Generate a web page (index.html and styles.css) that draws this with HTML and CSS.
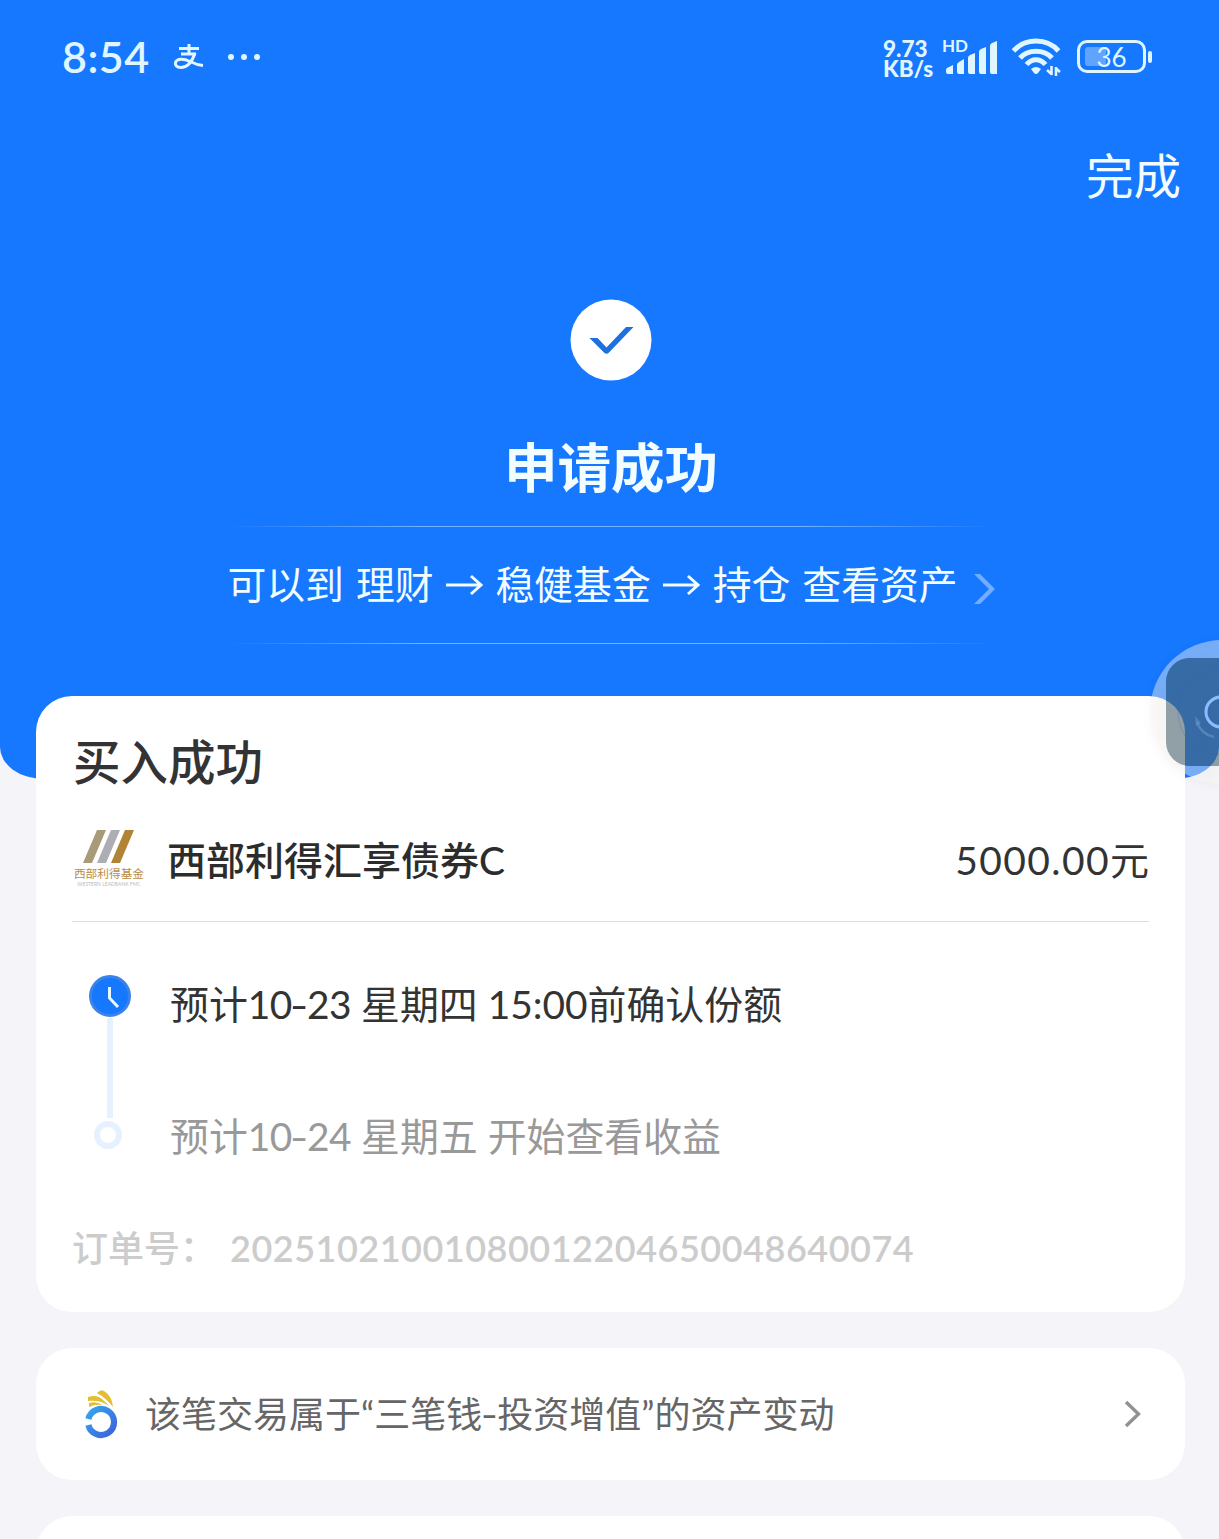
FILE: index.html
```html
<!DOCTYPE html>
<html lang="zh-CN">
<head>
  <meta charset="UTF-8" />
  <meta name="viewport" content="width=device-width, initial-scale=1.0"/>
  <title>申请成功</title>
  <link rel="stylesheet" href="styles.css">
</head>
<body>

  <header class="hero">
    <div class="status-bar">
      <div class="status-left">
        <span class="time">8:54</span>
        <svg class="pay-icon" width="30" height="28" viewBox="0 0 30 28" fill="none" stroke="#e4f7ff">
          <path d="M5 5.5H25M15 1V11M7 11H22" stroke-width="3"/>
          <path d="M21 10C18 19 13 24.500 7 24.500C2.500 24.500 1 22 1.500 19.500C3 15 10 15.500 16 18.500C20 20.500 24 22 29 22.500" stroke-width="3"/>
        </svg>
        <svg class="dots" width="34" height="8" viewBox="0 0 34 8" fill="#e0f6ff">
          <circle cx="4" cy="4" r="3"/><circle cx="17" cy="4" r="3"/><circle cx="30" cy="4" r="3"/>
        </svg>
      </div>
      <div class="status-right">
        <div class="speed"><span>9.73</span><span>KB/s</span></div>
        <div class="signal">
          <span class="hd">HD</span>
          <svg width="54" height="36" viewBox="0 0 54 36" fill="#e0f6ff">
            <path d="M1 31Q1 30 2 29L8 26V35H3Q1 35 1 33ZM12 26Q12 24 14 23L19 20V35H14Q12 35 12 33ZM23 19Q23 17 25 16L30 14V35H25Q23 35 23 33ZM34 13Q34 11 36 10L41 8V35H36Q34 35 34 33ZM45 7Q45 5 47 4L52 2V35H47Q45 35 45 33Z"/>
          </svg>
        </div>
        <svg class="wifi" width="50" height="40" viewBox="0 0 50 40" fill="none" stroke="#e0f6ff" stroke-width="5">
          <path d="M2.500 14C14 0.800 36 0.800 47.500 14M9 21C17 12 33 12 41 21M15.500 27.500C21 21 29 21 34.500 27.500"/>
          <path d="M20 32Q25 28 30 32L27 36Q25 38 23 36Z" fill="#e0f6ff" stroke="none"/>
          <path d="M40.500 29V38M41 37.500L36 33M45 39V30M44.500 31L49 35" stroke-width="2.600"/>
        </svg>
        <div class="battery"><span class="battery-body"><b></b>36</span><i></i></div>
      </div>
    </div>

    <a class="done" href="#">完成</a>

    <svg class="check" width="82" height="82" viewBox="0 0 82 82">
      <circle cx="41" cy="41" r="40.500" fill="#fff"/>
      <path d="M19.500 39H27.500L36.500 48.500L56 28H63.500L39 53.500Q36.500 56 34 53.500Z" fill="#1e70e0"/>
    </svg>
    <h1>申请成功</h1>

    <a class="guide" href="#">
      <span>可以到</span><span>理财</span>
      <svg class="arrow" width="38" height="30" viewBox="0 0 38 30"><path d="M0 15H35M25 6L35 15L25 24"/></svg>
      <span>稳健基金</span>
      <svg class="arrow" width="38" height="30" viewBox="0 0 38 30"><path d="M0 15H35M25 6L35 15L25 24"/></svg>
      <span>持仓</span><span>查看资产</span>
      <svg class="guide-more" width="22" height="32" viewBox="0 0 22 32"><path d="M0 1H6L21 16L6 31H0L15 16Z" fill="#72adff"/></svg>
    </a>
  </header>

  <main class="container">
    <section class="card order">
      <h2>买入成功</h2>

      <div class="fund">
        <div class="fund-logo">
          <svg width="52" height="33" viewBox="0 0 52 33">
            <path d="M14 0H23L9 33H0Z" fill="#a99a78"/>
            <path d="M28 0H37L23 33H14Z" fill="#adaeb3"/>
            <path d="M42 0H51L37 33H28Z" fill="#b18435"/>
          </svg>
          <span class="logo-cn">西部利得基金</span>
          <span class="logo-en">WESTERN LEADBANK FMC</span>
        </div>
        <span class="fund-name">西部利得汇享债券C</span>
        <span class="amount">5000.00<span>元</span></span>
      </div>

      <div class="steps">
        <div class="track">
          <svg width="44" height="44" viewBox="0 0 44 44">
            <circle cx="22" cy="22" r="19.500" fill="#1677ff" stroke="#3c83e8" stroke-width="3"/>
            <path d="M21.500 13V24L30 33" fill="none" stroke="#e9fbff" stroke-width="3"/>
          </svg>
          <span class="line"></span>
          <span class="ring"></span>
        </div>
        <div class="step-list">
          <p>预计<span class="date">10<i>-</i>23</span> <span>星期四</span> <span>15:00</span>前确认份额</p>
          <p class="pending">预计<span class="date">10<i>-</i>24</span> <span>星期五</span> <span>开始查看收益</span></p>
        </div>
      </div>

      <div class="order-no"><span class="order-label">订单号：</span><span class="order-value">20251021001080012204650048640074</span></div>
    </section>

    <a class="card change" href="#">
      <svg class="money-icon" width="34" height="50" viewBox="0 0 34 50">
        <defs>
          <linearGradient id="ringFill" x1="0" y1="0" x2="1" y2="1">
            <stop offset="0" stop-color="#35a5ed"/>
            <stop offset="1" stop-color="#3d62dc"/>
          </linearGradient>
        </defs>
        <path d="M4.400 30A13 13 0 1 1 4.400 36" fill="none" stroke="url(#ringFill)" stroke-width="6.200"/>
        <path d="M13 4Q17 0 20 2Q28 7 29 18Q22 9 13 4ZM4 8Q13 5 19 11Q23 14 25 17Q17 11 4 12ZM5 14Q13 12 18 16Q11 15 5 18Z" fill="#e5bd32"/>
      </svg>
      <span class="change-text">该笔交易属于<q>三笔钱<em>-</em>投资增值</q>的资产变动</span>
      <svg class="more" width="18" height="28" viewBox="0 0 18 28"><path d="M2 2L14.500 14L2 26" fill="none" stroke="#929292" stroke-width="3.400"/></svg>
    </a>

    <section class="card next"></section>
  </main>

  <!-- floating shortcut, half docked past the right edge -->
  <svg class="float-ball" width="79" height="160" viewBox="0 0 79 160">
    <path d="M82 10A72 72 0 1 0 82 154V136H50A24 24 0 0 1 26 112V52A24 24 0 0 1 50 28H82Z" fill="#f8f6f4" fill-opacity="0.430" fill-rule="evenodd"/>
    <rect x="26" y="28" width="90" height="108" rx="24" fill="#4f6571" fill-opacity="0.600"/>
    <circle cx="81" cy="82" r="43" fill="none" stroke="#2f62a4" stroke-opacity="0.250"/>
    <circle cx="81" cy="82" r="15" fill="none" stroke="#8cbcff" stroke-width="3"/>
    <path d="M57 92Q61 104 74 107" fill="none" stroke="#6594cb" stroke-opacity="0.600" stroke-width="2.500"/>
    <path d="M55 86L61 93L56 96Z" fill="#6594cb" fill-opacity="0.600"/>
  </svg>

</body>
</html>
```
FILE: styles.css
```css
* {
  box-sizing: border-box;
}

body {
  position: relative;
  height: 1539px;
  margin: 0;
  overflow: hidden;
  background: #f4f4f9;
  color: #333;
  font-family: Lato, "Noto Sans CJK SC", sans-serif;
}

a {
  color: inherit;
  text-decoration: none;
}

h1, h2, p {
  margin: 0;
}

svg {
  display: block;
  flex: none;
}

.hero {
  display: flex;
  flex-direction: column;
  align-items: center;
  height: 779px;
  background: #1677ff;
  border-radius: 0 0 44px 44px / 0 0 32px 32px;
  color: #f2fdff;
}

/* status bar */
.status-bar {
  display: flex;
  justify-content: space-between;
  width: 100%;
  height: 114px;
  padding: 0 67px 0 62px;
  color: #e0f6ff;
}

.status-left, .status-right {
  display: flex;
  align-items: center;
  height: 113px;
}

.time {
  width: 88px;
  font-size: 43px;
  font-weight: 600;
  letter-spacing: 0.5px;
}

.pay-icon {
  margin-left: 24px;
}

.dots {
  margin-left: 23px;
}

.speed {
  display: flex;
  flex-direction: column;
  width: 56px;
  margin-right: 6px;
  padding-top: 4px;
  font-size: 22.500px;
  font-weight: 900;
  line-height: 20px;
}

.signal {
  position: relative;
  width: 54px;
  margin-right: 12px;
}

.hd {
  position: absolute;
  top: -3px;
  left: -3px;
  font-size: 17px;
  font-weight: 700;
  line-height: 20px;
}

.wifi {
  margin-right: 16px;
}

.battery {
  display: flex;
  align-items: center;
  gap: 2px;
}

.battery-body {
  position: relative;
  z-index: 0;
  width: 69px;
  height: 33px;
  border: 3px solid #e0f6ff;
  border-radius: 10px;
  font-size: 26px;
  line-height: 28px;
  text-align: center;
}

.battery-body b {
  position: absolute;
  z-index: -1;
  top: 4px;
  left: 5px;
  width: 21px;
  height: 19px;
  border-radius: 3px;
  background: #60a4ff;
}

.battery i {
  width: 4px;
  height: 12px;
  border-radius: 2px;
  background: #e0f6ff;
}

.done {
  align-self: flex-end;
  height: 124px;
  margin-right: 38px;
  font-size: 47.500px;
  line-height: 123px;
}

.check {
  margin: 61px 0 0 2px;
}

h1 {
  margin: 46px 0 0 3px;
  font-size: 53.500px;
  font-weight: 700;
  line-height: 80px;
}

.guide {
  display: flex;
  align-items: center;
  width: 770px;
  height: 118px;
  margin-top: 19px;
  padding-left: 3px;
  background:
    linear-gradient(90deg, transparent, #72b2ff 25%, #72b2ff 75%, transparent) top / 100% 1px no-repeat,
    linear-gradient(90deg, transparent, #72b2ff 25%, #72b2ff 75%, transparent) bottom / 100% 1px no-repeat;
  font-size: 38.800px;
  line-height: 56px;
  white-space: nowrap;
}

.guide span {
  flex: none;
  margin-top: -2px;
}

.guide span + span {
  margin-left: 12px;
}

.arrow {
  margin: 0 12px;
  fill: none;
  stroke: #f2fdff;
  stroke-width: 3;
}

.guide-more {
  margin: 8px 0 0 16px;
}

/* cards */
.container {
  display: flex;
  flex-direction: column;
  gap: 36px;
  height: 843px;
  margin: -83px 34px 0 36px;
  overflow: hidden;
}

.card {
  flex: none;
  background: white;
  border-radius: 36px;
}

.order {
  height: 616px;
  padding: 30px 36px 0;
}

h2 {
  padding-left: 1px;
  font-size: 47.500px;
  font-weight: 500;
  line-height: 72px;
}

.fund {
  display: flex;
  align-items: center;
  height: 124px;
  padding-bottom: 3px;
  border-bottom: 1px solid #ddd;
}

.fund-logo {
  display: flex;
  flex-direction: column;
  align-items: center;
  width: 74px;
}

.logo-cn {
  margin-top: 1px;
  color: #b98d45;
  font-size: 11.700px;
  line-height: 18px;
  white-space: nowrap;
}

.logo-en {
  color: #bbb;
  font-size: 5px;
  line-height: 5px;
  white-space: nowrap;
}

.fund-name {
  margin-left: 21px;
  color: #2c2c2c;
  font-size: 39px;
  font-weight: 500;
}

.amount {
  margin-left: auto;
  font-size: 39px;
  letter-spacing: 1.400px;
}

.amount span {
  letter-spacing: 0;
}

.steps {
  display: flex;
  height: 300px;
  padding-top: 52px;
}

.track {
  display: flex;
  flex-direction: column;
  align-items: center;
  width: 44px;
  margin-left: 16px;
}

.line {
  width: 6px;
  height: 100px;
  background: #e6f1ff;
}

.ring {
  width: 28px;
  height: 28px;
  margin: 3px 4px 0 0;
  border: 6px solid #e6f1ff;
  border-radius: 50%;
}

.step-list {
  margin-left: 38px;
}

.step-list p {
  height: 132px;
  font-size: 38.900px;
  line-height: 60px;
  white-space: nowrap;
}

.date {
  letter-spacing: -0.500px;
}

.date i {
  display: inline-block;
  width: 15px;
  font-style: normal;
  transform: scaleX(1.300);
}

.step-list .pending {
  color: #999;
}

.order-no {
  display: flex;
  color: #ccc;
  font-size: 36px;
  line-height: 52px;
}

.order-label {
  width: 158px;
  font-weight: 500;
}

.order-value {
  font-weight: 600;
  letter-spacing: 0.500px;
}

.change {
  display: flex;
  align-items: center;
  height: 132px;
  padding: 0 43px 0 48px;
  color: #666;
  font-size: 36px;
}

.change-text {
  margin: -4px 0 0 27px;
}

.change q {
  quotes: "“" "”";
}

.change em {
  display: inline-block;
  width: 15px;
  font-style: normal;
  text-align: center;
  transform: scaleX(1.300);
}

.more {
  margin-left: auto;
}

.next {
  height: 120px;
}

.float-ball {
  position: absolute;
  top: 630px;
  right: 0;
  filter: drop-shadow(0 2px 5px rgba(0, 0, 0, 0.080));
}
```
